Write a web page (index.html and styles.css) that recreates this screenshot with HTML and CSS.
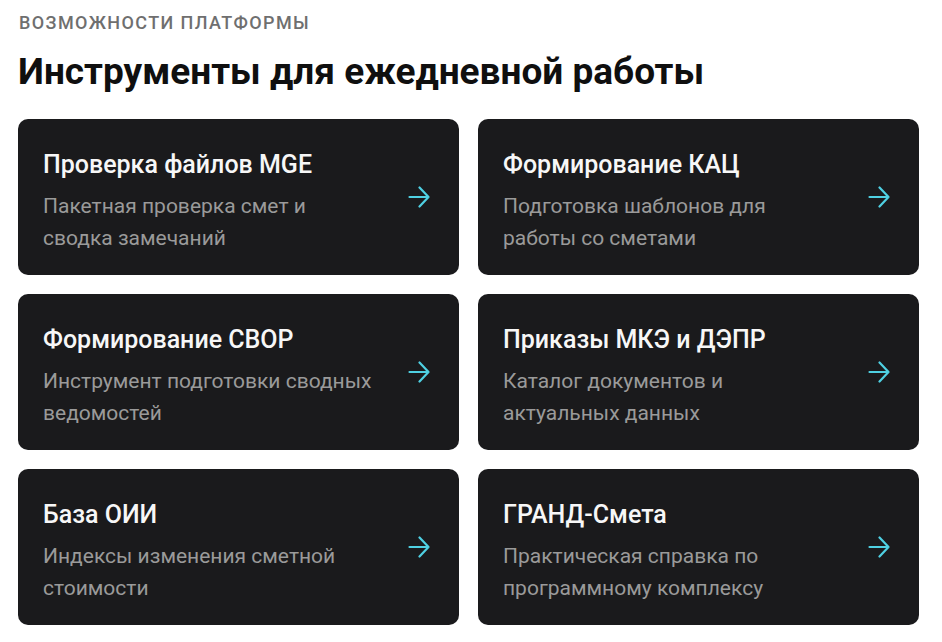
FILE: index.html
```html
<!DOCTYPE html>
<html lang="ru">
<head>
<meta charset="utf-8">
<link rel="stylesheet" href="styles.css">
</head>
<body>
<section class="section">
  <div class="eyebrow">ВОЗМОЖНОСТИ ПЛАТФОРМЫ</div>
  <h1 class="title">Инструменты для ежедневной работы</h1>
  <div class="grid">
    <a class="card" href="#">
      <div class="card-text">
        <div class="card-title">Проверка файлов MGE</div>
        <div class="card-desc">Пакетная проверка смет и сводка замечаний</div>
      </div>
      <svg class="arrow" viewBox="0 0 22 22"><path d="M1.5 11h19M11.5 1.5l9 9.5-9 9.5"/></svg>
    </a>
    <a class="card" href="#">
      <div class="card-text">
        <div class="card-title">Формирование КАЦ</div>
        <div class="card-desc">Подготовка шаблонов для работы со сметами</div>
      </div>
      <svg class="arrow" viewBox="0 0 22 22"><path d="M1.5 11h19M11.5 1.5l9 9.5-9 9.5"/></svg>
    </a>
    <a class="card" href="#">
      <div class="card-text">
        <div class="card-title">Формирование СВОР</div>
        <div class="card-desc">Инструмент подготовки сводных ведомостей</div>
      </div>
      <svg class="arrow" viewBox="0 0 22 22"><path d="M1.5 11h19M11.5 1.5l9 9.5-9 9.5"/></svg>
    </a>
    <a class="card" href="#">
      <div class="card-text">
        <div class="card-title">Приказы МКЭ и ДЭПР</div>
        <div class="card-desc">Каталог документов и актуальных данных</div>
      </div>
      <svg class="arrow" viewBox="0 0 22 22"><path d="M1.5 11h19M11.5 1.5l9 9.5-9 9.5"/></svg>
    </a>
    <a class="card" href="#">
      <div class="card-text">
        <div class="card-title">База ОИИ</div>
        <div class="card-desc">Индексы изменения сметной стоимости</div>
      </div>
      <svg class="arrow" viewBox="0 0 22 22"><path d="M1.5 11h19M11.5 1.5l9 9.5-9 9.5"/></svg>
    </a>
    <a class="card" href="#">
      <div class="card-text">
        <div class="card-title">ГРАНД-Смета</div>
        <div class="card-desc">Практическая справка по программному комплексу</div>
      </div>
      <svg class="arrow" viewBox="0 0 22 22"><path d="M1.5 11h19M11.5 1.5l9 9.5-9 9.5"/></svg>
    </a>
  </div>
</section>
</body>
</html>
```
FILE: styles.css
```css
html, body {
  margin: 0;
  background: #ffffff;
}
body {
  font-family: Roboto, "Noto Sans", sans-serif;
  color: #111111;
}
.section {
  padding: 12px 23px 0 18px;
}
.eyebrow {
  font-size: 18px;
  font-weight: 500;
  letter-spacing: 1.4px;
  color: #6f6f6f;
  line-height: 22px;
  padding-left: 1px;
}
.title {
  margin: 16px 0 0 0;
  font-size: 37px;
  font-weight: 700;
  line-height: 44px;
  color: #0f0f0f;
}
.grid {
  margin-top: 25px;
  display: grid;
  grid-template-columns: 441px 441px;
  column-gap: 19px;
  row-gap: 19px;
}
.card {
  display: flex;
  align-items: center;
  justify-content: space-between;
  height: 156px;
  box-sizing: border-box;
  padding: 0 29px 0 25px;
  background: #1a1a1c;
  border-radius: 10px;
  text-decoration: none;
}
.card-text {
  width: 333px;
  padding-top: 8px;
}
.card-title {
  font-size: 25px;
  font-weight: 500;
  color: #f7f7f7;
  line-height: 32px;
  margin-bottom: 9px;
}
.card-desc {
  font-size: 21px;
  color: #9a9a9a;
  line-height: 32px;
}
.arrow {
  width: 22px;
  height: 22px;
  fill: none;
  stroke: #4fd0e2;
  stroke-width: 2.2;
  stroke-linecap: round;
  stroke-linejoin: round;
  flex: none;
}
```
